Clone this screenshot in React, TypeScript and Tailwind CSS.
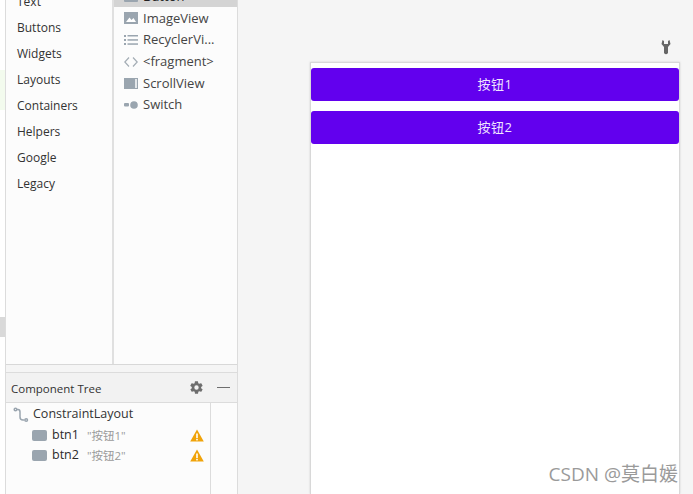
const categories = ["Text", "Buttons", "Widgets", "Layouts", "Containers", "Helpers", "Google", "Legacy"];

function ImageIcon() {
  return (
    <svg width="14" height="12" viewBox="0 0 14 12">
      <rect width="14" height="12" fill="#9aa5af" />
      <path d="M2 10 L5.5 5.5 L7.5 8 L9.5 6 L12 10 Z" fill="#fff" />
    </svg>
  );
}

function ListIcon() {
  return (
    <svg width="14" height="12" viewBox="0 0 14 12" fill="#9aa5af">
      <rect x="0" y="1" width="2" height="2" />
      <rect x="3.5" y="1" width="10.5" height="1.5" />
      <rect x="0" y="5" width="2" height="2" />
      <rect x="3.5" y="5.2" width="10.5" height="1.5" />
      <rect x="0" y="9" width="2" height="2" />
      <rect x="3.5" y="9.3" width="10.5" height="1.5" />
    </svg>
  );
}

function CodeIcon() {
  return (
    <svg width="14" height="12" viewBox="0 0 14 12" fill="none" stroke="#a4adb5" strokeWidth="1.2">
      <path d="M5 1.5 L0.8 6 L5 10.5" />
      <path d="M9 1.5 L13.2 6 L9 10.5" />
    </svg>
  );
}

function ScrollIcon() {
  return (
    <svg width="14" height="11" viewBox="0 0 14 11">
      <rect width="14" height="11" fill="#9aa5af" />
      <rect x="11" y="1" width="2" height="9" fill="#e4e7ea" />
    </svg>
  );
}

function SwitchIcon() {
  return (
    <svg width="14" height="10" viewBox="0 0 14 10" fill="#9aa5af">
      <rect x="0" y="3" width="5" height="3.500" rx="1" />
      <circle cx="10" cy="5" r="3.800" />
    </svg>
  );
}

function WarnIcon() {
  return (
    <svg width="14" height="13" viewBox="0 0 14 13">
      <path d="M7 0.500 L13.800 12.500 L0.200 12.500 Z" fill="#f0a30a" />
      <rect x="6.200" y="4.500" width="1.600" height="4.500" fill="#fff" />
      <rect x="6.200" y="9.800" width="1.600" height="1.600" fill="#fff" />
    </svg>
  );
}

const palette = [
  { name: "ImageView", icon: <ImageIcon /> },
  { name: "RecyclerVi...", icon: <ListIcon /> },
  { name: "<fragment>", icon: <CodeIcon /> },
  { name: "ScrollView", icon: <ScrollIcon /> },
  { name: "Switch", icon: <SwitchIcon /> },
];

function TreeRow({ name, label }: { name: string; label: string }) {
  return (
    <div className="flex h-[20.5px] items-center pl-[26px] pr-[6px]">
      <div className="h-[11px] w-[15px] rounded-[2px] bg-[#9aa5af]" />
      <span className="ml-[5px] text-[12.5px] text-[#2b2b2b]">{name}</span>
      <span className="ml-[8px] text-[11.5px] text-[#9a9a9a]">{label}</span>
      <div className="ml-auto flex">
        <WarnIcon />
      </div>
    </div>
  );
}

function DeviceButton({ label }: { label: string }) {
  return (
    <div className="flex h-[33px] items-center justify-center rounded-[3px] bg-[#6200ee] text-[13px] tracking-[0.5px] text-[#f0e6ff]">
      {label}
    </div>
  );
}

export default function App() {
  return (
    <div
      className="flex h-[494px] w-[693px] overflow-hidden bg-white"
      style={{ fontFamily: '"Open Sans", "Noto Sans CJK SC", sans-serif' }}
    >
      {/* Left edge of the editor */}
      <div className="flex w-[5px] shrink-0 flex-col bg-white">
        <div className="mt-[70px] h-[40px] bg-[#f3fbee]" />
        <div className="mt-[207px] h-[20px] bg-[#d9d9d9]" />
      </div>

      {/* Palette and component tree */}
      <div className="flex w-[233px] shrink-0 flex-col border-x border-[#dcdcdc] bg-[#fcfcfc]">
        <div className="flex h-[365px] shrink-0 overflow-hidden border-b border-[#d8d8d8]">
          <div className="-mt-[12px] w-[108px] shrink-0 border-r-2 border-[#e0e0e0] pl-[11px] pt-[1.500px] text-[12px] text-[#333]">
            {categories.map((c) => (
              <div key={c} className="flex h-[25.9px] items-center">
                {c}
              </div>
            ))}
          </div>
          <div className="flex-1">
            <div className="-mt-[14px] flex h-[21px] items-center bg-[#d4d4d4] pl-[10px] text-[13px] text-[#222]">
              <div className="h-[11px] w-[14px] rounded-[1px] bg-[#9aa5af]" />
              <span className="ml-[5px]">Button</span>
            </div>
            <div className="pt-[0.5px]">
              {palette.map((p) => (
                <div key={p.name} className="flex h-[21.7px] items-center pl-[10px] text-[13px] text-[#444]">
                  <div className="flex w-[14px] justify-center">{p.icon}</div>
                  <span className="ml-[5px] whitespace-nowrap">{p.name}</span>
                </div>
              ))}
            </div>
          </div>
        </div>
        <div className="h-[8px] shrink-0 border-b border-[#dcdcdc] bg-[#f5f5f5]" />
        <div className="flex h-[30px] shrink-0 items-center border-b border-[#dcdcdc] bg-[#f2f2f2] pl-[5px] pr-[7px] text-[11.5px] text-[#333]">
          <span className="mt-[2px]">Component Tree</span>
          <svg className="ml-auto" width="15" height="15" viewBox="0 0 24 24" fill="#6e6e6e">
            <path d="M19.4 13a7.6 7.6 0 0 0 0-2l2.1-1.6a.5.5 0 0 0 .1-.6l-2-3.5a.5.5 0 0 0-.6-.2l-2.5 1a7.3 7.3 0 0 0-1.7-1L14.4 2.400a.5.5 0 0 0-.5-.4h-4a.5.5 0 0 0-.5.4L9 5.100a7.3 7.3 0 0 0-1.700 1l-2.500-1a.5.5 0 0 0-.6.2l-2 3.500a.5.500 0 0 0 .1.600L4.500 11a7.600 7.600 0 0 0 0 2l-2.100 1.600a.5.500 0 0 0-.1.600l2 3.500a.5.500 0 0 0 .6.200l2.500-1a7.300 7.300 0 0 0 1.700 1l.4 2.700a.5.500 0 0 0 .5.400h4a.5.500 0 0 0 .5-.4l.4-2.700a7.300 7.300 0 0 0 1.700-1l2.500 1a.5.500 0 0 0 .6-.2l2-3.500a.5.500 0 0 0-.1-.6ZM12 15.500a3.500 3.500 0 1 1 0-7 3.500 3.500 0 0 1 0 7Z" />
          </svg>
          <div className="ml-[13px] h-[1.500px] w-[13px] bg-[#6e6e6e]" />
        </div>
        <div className="flex flex-1">
          <div className="w-[205px] shrink-0 border-r border-[#dcdcdc] pt-[1px]">
            <div className="flex h-[21px] items-center pl-[7px] text-[12.5px] text-[#333]">
              <svg width="16" height="16" viewBox="0 0 16 16" fill="none" stroke="#9aa5af" strokeWidth="1.500">
                <circle cx="2.500" cy="2.500" r="1.300" />
                <path d="M4 2.500 H5 Q7 2.500 7 5 V10 Q7 13 10 13 H11.500" />
                <circle cx="13.200" cy="13" r="1.300" />
              </svg>
              <span className="ml-[4px]">ConstraintLayout</span>
            </div>
            <TreeRow name="btn1" label={'"按钮1"'} />
            <TreeRow name="btn2" label={'"按钮2"'} />
          </div>
        </div>
      </div>

      {/* Design surface */}
      <div className="relative flex flex-1 flex-col bg-[#f5f5f5] pl-[72px] pr-[13px]">
        <div className="flex h-[62px] shrink-0 items-start justify-end pr-[9px] pt-[40px]">
          <svg width="10" height="15" viewBox="0 0 10 15" fill="#666">
            <path d="M1.500 0 L0.500 4 L3 7 V13 Q5 15.500 7 13 V7 L9.500 4 L8.500 0 L7 1 V4 H3 V1 Z" />
          </svg>
        </div>
        <div className="flex flex-1 flex-col gap-[10px] border-x border-t border-[#d8d8d8] bg-white pt-[5px] shadow-[0_0_2px_rgba(0,0,0,0.15)]">
          <DeviceButton label="按钮1" />
          <DeviceButton label="按钮2" />
        </div>
        <div className="absolute bottom-[9px] right-[15px] text-[19px] leading-[22px] text-[#9a9a9a]">
          CSDN @莫白媛
        </div>
      </div>
    </div>
  );
}
